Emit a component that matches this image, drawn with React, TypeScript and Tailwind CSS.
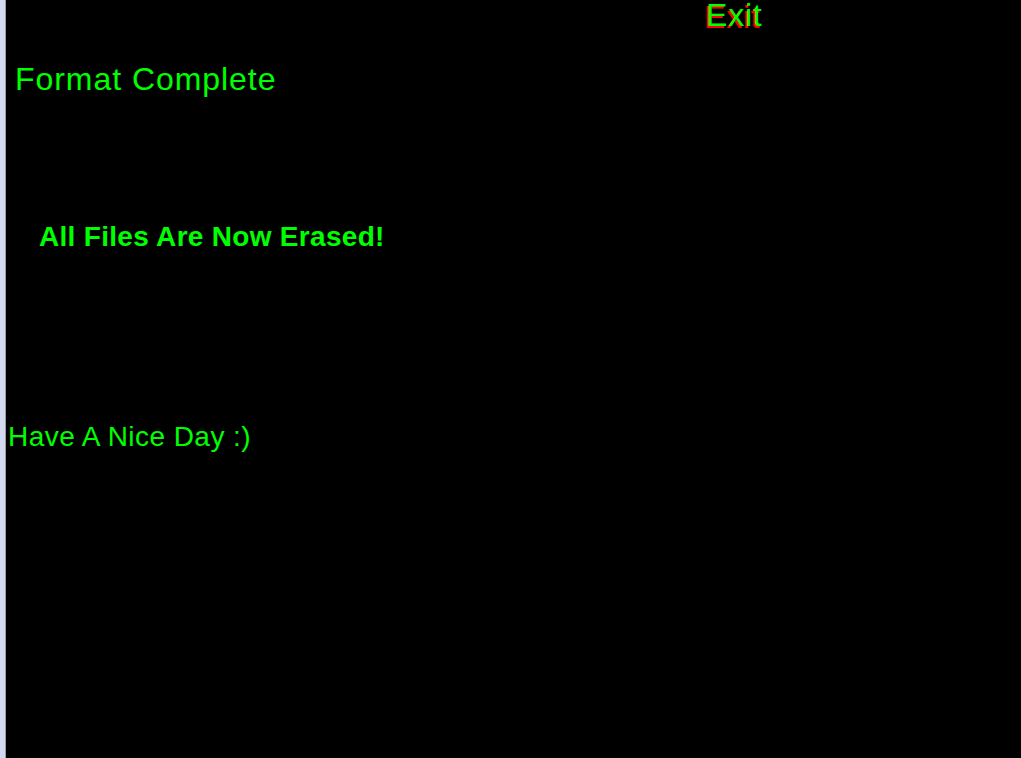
function App(): JSX.Element {
  return (
    <section className="flex h-[758px] w-full overflow-hidden bg-black font-['Liberation_Sans',Arial,sans-serif] text-[#00ff00]">
      <div className="w-[5px] shrink-0 bg-[#d3d9ef]"></div>
      <div className="w-[1px] shrink-0 bg-[#9a9ba0]"></div>

      <div className="flex flex-1 flex-col">
        <div className="ml-[700px] text-[32px] leading-[30px] tracking-[0.8px] [text-shadow:-2px_2px_0_#ff0000]">
          Exit
        </div>

        <div className="ml-[9px] mt-[33px] text-[32px] leading-none tracking-[0.95px]">
          Format Complete
        </div>

        <div className="ml-[33px] mt-[128px] text-[28px] font-bold leading-none tracking-[0.3px]">
          All Files Are Now Erased!
        </div>

        <div className="ml-[2px] mt-[172px] text-[28px] leading-none tracking-[0.45px]">
          Have A Nice Day :)
        </div>
      </div>
    </section>
  );
}

export default App;
